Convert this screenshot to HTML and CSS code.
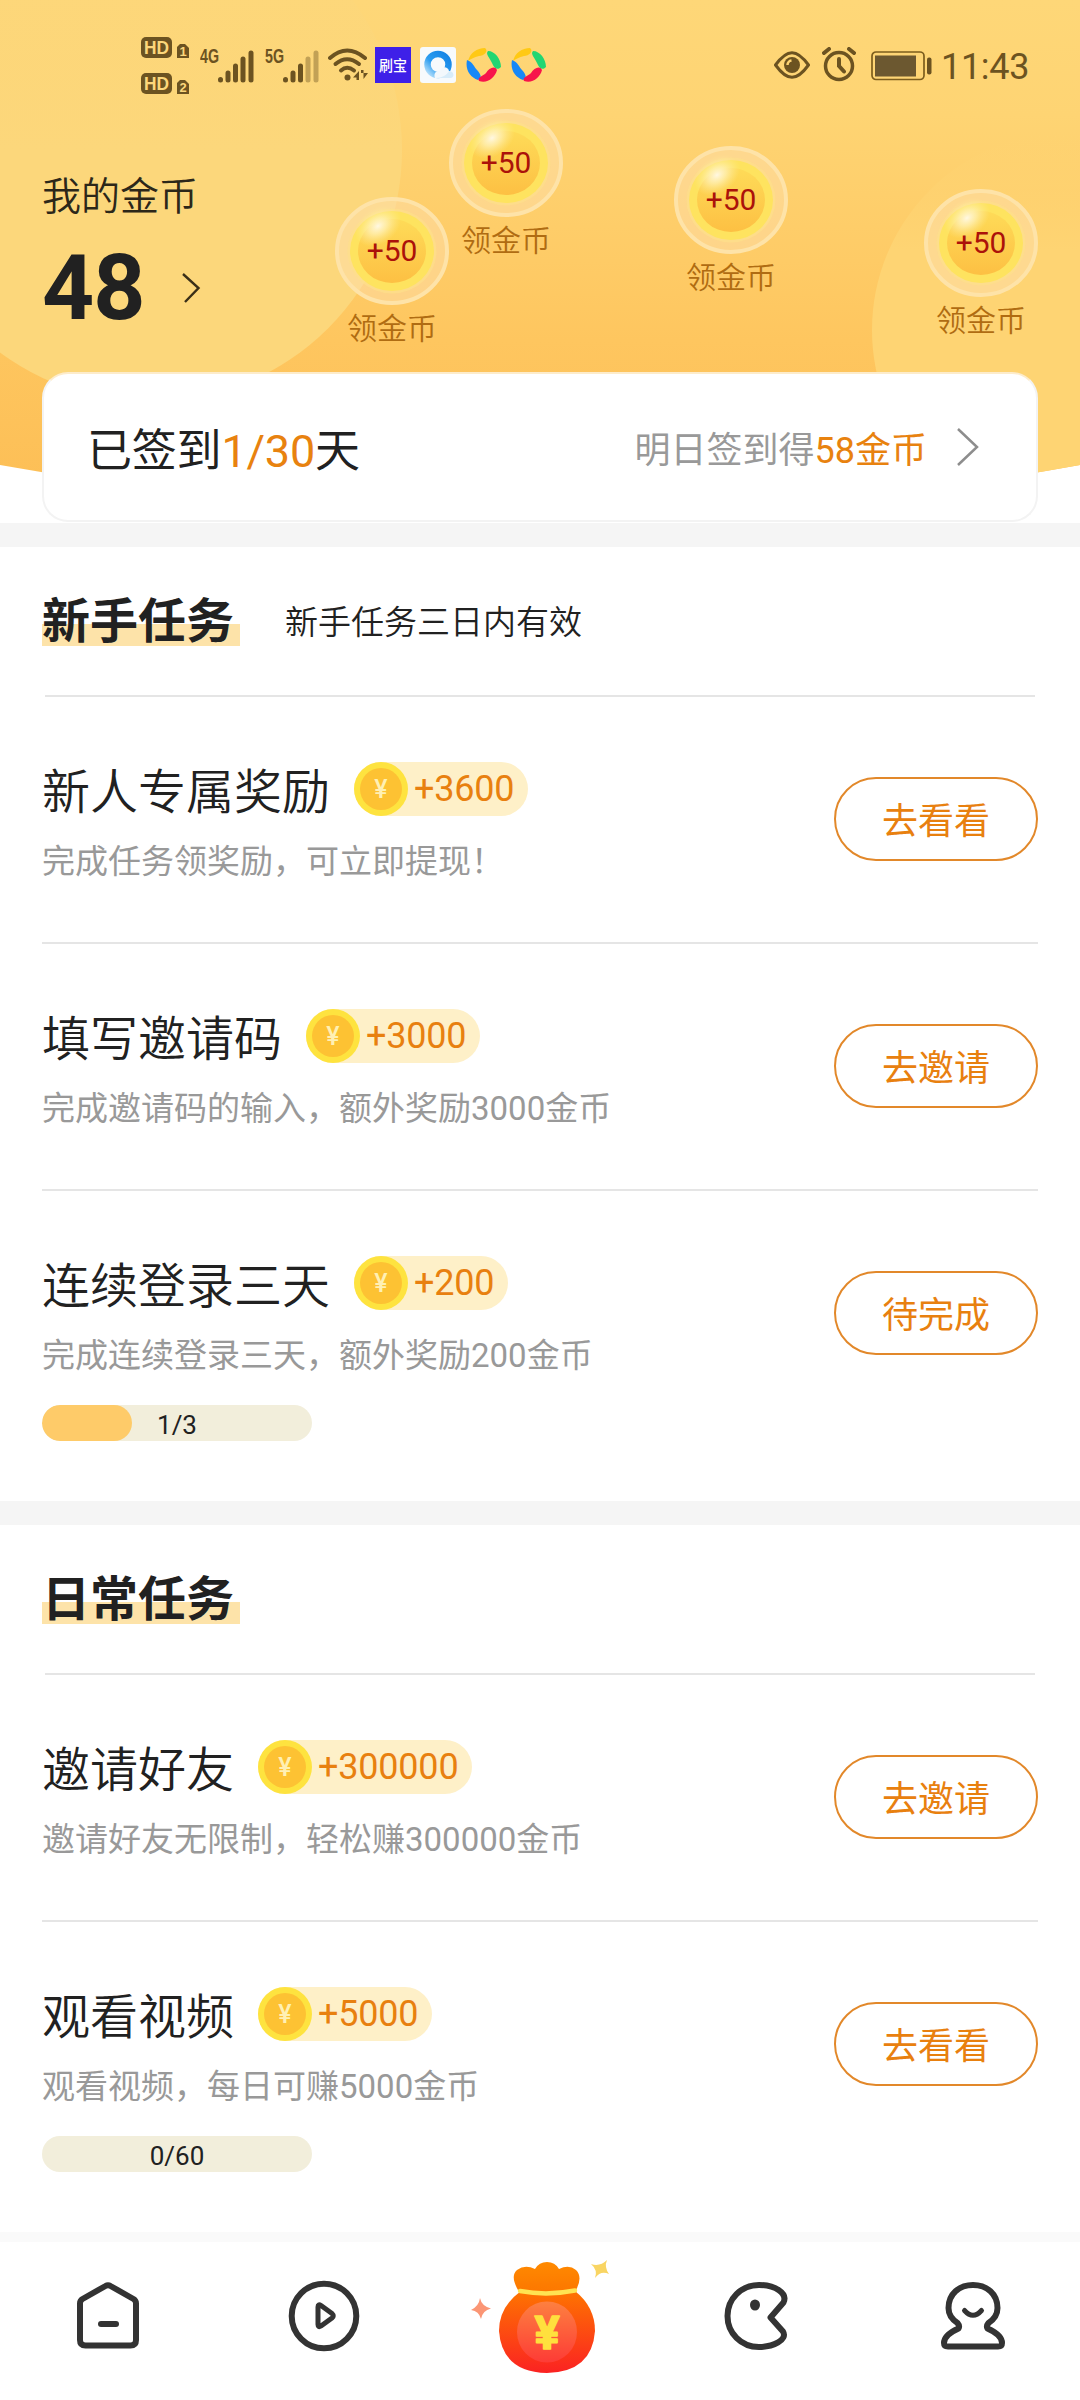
FILE: index.html
```html
<!DOCTYPE html>
<html lang="zh-CN">
<head>
<meta charset="utf-8">
<title>我的金币</title>
<link rel="stylesheet" href="styles.css">
</head>
<body>
<svg class="defs" width="0" height="0" aria-hidden="true">
  <defs>
    <linearGradient id="skyGrad" x1="0" y1="0" x2="0" y2="1"><stop offset="0" stop-color="#fed778"/><stop offset=".22" stop-color="#fed473"/><stop offset=".65" stop-color="#fec65f"/><stop offset="1" stop-color="#fcbd54"/></linearGradient>
    <linearGradient id="rightGlow" x1="0" y1="0" x2="0" y2="1"><stop offset="0" stop-color="#fed473" stop-opacity="0"/><stop offset=".3" stop-color="#fed473"/><stop offset="1" stop-color="#fed473"/></linearGradient>
    <linearGradient id="leftGlow" x1="0" y1="0" x2="0" y2="1"><stop offset="0" stop-color="#fcd77b" stop-opacity=".3"/><stop offset=".5" stop-color="#fcd77b"/><stop offset="1" stop-color="#fcd77b"/></linearGradient>
    <linearGradient id="coinGrad" x1="0" y1="0" x2="0" y2="1"><stop offset="0" stop-color="#fedb58"/><stop offset="1" stop-color="#fdc043"/></linearGradient>
    <radialGradient id="shine"><stop offset="0" stop-color="#fff8e2"/><stop offset=".4" stop-color="#fff1b8" stop-opacity=".75"/><stop offset="1" stop-color="#ffe890" stop-opacity="0"/></radialGradient>
    <linearGradient id="bagGrad" x1="0" y1="0" x2="0" y2="1"><stop offset="0" stop-color="#fe7400"/><stop offset="1" stop-color="#fb2222"/></linearGradient>
    <linearGradient id="bagTop" x1="0" y1="0" x2="0" y2="1"><stop offset="0" stop-color="#ff8a00"/><stop offset="1" stop-color="#fc7600"/></linearGradient>
    <linearGradient id="bagFace" x1="0" y1="0" x2="0" y2="1"><stop offset="0" stop-color="#fd8040"/><stop offset="1" stop-color="#fd3b36"/></linearGradient>
    <linearGradient id="browserGrad" x1="1" y1="0" x2="0" y2="1"><stop offset="0" stop-color="#1583e4"/><stop offset=".6" stop-color="#2b9df0"/><stop offset="1" stop-color="#bfe4fb"/></linearGradient>
    <symbol id="bubble" viewBox="0 0 114 108">
      <ellipse cx="57" cy="54" rx="55" ry="52" fill="#ffe0b4" fill-opacity=".45" stroke="#fee3a8" stroke-width="4"/>
      <ellipse cx="57" cy="54" rx="44.500" ry="42.500" fill="#fee08a" fill-opacity=".7"/>
      <ellipse cx="57" cy="54" rx="42" ry="40" fill="#fee35f"/>
      <ellipse cx="57" cy="54" rx="34" ry="32" fill="url(#coinGrad)"/>
      <ellipse cx="43" cy="29" rx="25" ry="18" fill="url(#shine)" transform="rotate(-35 43 29)"/>
    </symbol>
    <symbol id="coin" viewBox="0 0 54 54">
      <circle cx="27" cy="27" r="27" fill="#fee33f"/>
      <circle cx="27" cy="27" r="21" fill="#fdc233"/>
      <text x="27" y="36" class="coin-yen">¥</text>
    </symbol>
    <symbol id="pinwheel" viewBox="0 0 36 36">
      <path d="M2 14C4 6 11 1 19 1C23 4 18 9 13 9C8 10 5 12 2 14Z" fill="#ffc914"/>
      <path d="M22 4C29 4 35 12 35 20C31 24 28 21 26 16C24 11 19 7 22 4Z" fill="#22d672"/>
      <path d="M1 13C-1 23 4 30 12 33C17 31 14 26 11 23C8 20 7 15 1 13Z" fill="#1688f8"/>
      <path d="M31 23C29 31 21 37 13 34C11 30 17 29 20 26C23 21 29 18 31 23Z" fill="#f7144b"/>
    </symbol>
  </defs>
</svg>

<header class="hero">
  <svg class="hero-bg" viewBox="0 0 1080 523" aria-hidden="true">
    <clipPath id="heroShape"><path d="M0 0H1080V465Q540 563 0 465Z"/></clipPath>
    <g clip-path="url(#heroShape)">
      <rect width="1080" height="523" fill="url(#skyGrad)"/>
      <circle cx="150" cy="150" r="252" fill="url(#leftGlow)"/>
      <circle cx="1070" cy="330" r="198" fill="url(#rightGlow)"/>
    </g>
  </svg>

  <div class="status">
    <svg class="st-hd" width="48" height="58" viewBox="0 0 48 58">
      <g fill="#6c5321">
        <rect width="31" height="21" rx="5"/><path d="M39 7H44L48 11V21H36V10Z"/>
        <rect y="36" width="31" height="21" rx="5"/><path d="M39 43H44L48 47V57H36V46Z"/>
      </g>
      <g class="hd-text"><text x="3" y="17" textLength="25" lengthAdjust="spacingAndGlyphs">HD</text><text x="3" y="53" textLength="25" lengthAdjust="spacingAndGlyphs">HD</text></g>
      <g class="hd-num"><text x="38.500" y="19">1</text><text x="38.500" y="55">2</text></g>
    </svg>
    <svg class="st-4g" width="54" height="42" viewBox="0 -6 54 42">
      <text class="gen" x="0" y="15" textLength="19" lengthAdjust="spacingAndGlyphs">4G</text>
      <g class="bars"><path d="M20.500 31.500V32"/><path d="M28 25V32"/><path d="M35.500 18V32"/><path d="M43 11V32"/><path d="M51 5V32"/></g>
    </svg>
    <svg class="st-5g" width="54" height="42" viewBox="0 -6 54 42">
      <text class="gen" x="0" y="15" textLength="19" lengthAdjust="spacingAndGlyphs">5G</text>
      <g class="bars"><path d="M20.500 31.500V32"/><path d="M28 25V32"/><path d="M35.500 18V32"/><path d="M43 11V32" opacity=".4"/><path d="M51 5V32" opacity=".4"/></g>
    </svg>
    <svg class="st-wifi" width="40" height="34" viewBox="0 0 40 34">
      <g fill="none" stroke="#6c5321" stroke-width="4" stroke-linecap="round"><path d="M2 10Q19 -5 37 10"/><path d="M7.500 16Q19 6.500 31 16"/><path d="M13 22.500Q19 17 26 22.500"/></g>
      <circle cx="19.500" cy="29.500" r="3" fill="#6c5321"/>
      <path d="M31 23V32H28.500V29.500H25ZM33 22H35.500V31L40 25H33Z" fill="#6c5321"/>
    </svg>
    <svg class="st-app" width="36" height="36" viewBox="0 0 36 36"><rect width="36" height="36" fill="#3e20e8"/><text class="app-name" x="18" y="24" textLength="28" lengthAdjust="spacingAndGlyphs">刷宝</text></svg>
    <svg class="st-browser" width="36" height="36" viewBox="0 0 36 36">
      <rect width="36" height="36" rx="3" fill="#f7fafc"/><circle cx="18" cy="17.500" r="10.500" fill="none" stroke="url(#browserGrad)" stroke-width="6.500"/>
      <path d="M15 31C13 26 17 23 20 24C21 19 28 19 29 24C34 24 35 30 31 31Z" fill="#f3f8fc"/><path d="M16 31C22 31 27 28 29 24C34 24 35 30 31 31Z" fill="#d8ecf9"/>
    </svg>
    <svg class="st-pin1" width="36" height="36"><use href="#pinwheel"/></svg>
    <svg class="st-pin2" width="36" height="36"><use href="#pinwheel"/></svg>
    <svg class="st-eye" width="36" height="28" viewBox="0 0 36 28"><path d="M1.500 14C8 5 13 1.700 18 1.700S28 5 34.500 14C28 23 23 26.300 18 26.300S8 23 1.500 14Z" fill="none" stroke="#6c5321" stroke-width="3"/><circle cx="18" cy="14" r="8" fill="#6c5321"/><path d="M13.500 14A4.500 4.500 0 0 1 17.500 9.500" stroke="#fed473" stroke-width="2.500" fill="none"/></svg>
    <svg class="st-alarm" width="34" height="36" viewBox="0 0 34 36"><circle cx="17" cy="19" r="13.500" fill="none" stroke="#6c5321" stroke-width="3.500"/><path d="M17 12V19L22 24.500M2 6L7 2M32 6L27 2" fill="none" stroke="#6c5321" stroke-width="4" stroke-linecap="round"/></svg>
    <svg class="st-batt" width="62" height="30" viewBox="0 0 62 30"><rect x="1" y="1" width="52" height="27.500" rx="4" fill="none" stroke="#7c5d1d" stroke-width="1.700"/><rect x="4" y="4.500" width="41" height="21" fill="#6c5830"/><rect x="56" y="6.500" width="4.500" height="17" rx="2" fill="#6c5321"/></svg>
    <time class="clock">11:43</time>
  </div>

  <div class="balance">
    <p class="balance-label">我的金币</p>
    <div class="balance-row"><strong>48</strong><svg width="20" height="32" viewBox="0 0 20 32"><path d="M2 2L17.500 16L4 30" fill="none" stroke="#3a2f18" stroke-width="2.400"/></svg></div>
  </div>

  <div class="bubble b1"><svg width="114" height="108"><use href="#bubble"/></svg><b>+50</b><span>领金币</span></div>
  <div class="bubble b2"><svg width="114" height="108"><use href="#bubble"/></svg><b>+50</b><span>领金币</span></div>
  <div class="bubble b3"><svg width="114" height="108"><use href="#bubble"/></svg><b>+50</b><span>领金币</span></div>
  <div class="bubble b4"><svg width="114" height="108"><use href="#bubble"/></svg><b>+50</b><span>领金币</span></div>

  <div class="checkin">
    <p class="checkin-days">已签到<em>1/30</em>天</p>
    <p class="checkin-next">明日签到得<em>58金币</em></p>
    <svg width="24" height="40" viewBox="0 0 24 40"><path d="M2 2L21 20L2 38" fill="none" stroke="#8d8d8d" stroke-width="2.500"/></svg>
  </div>
</header>

<main>
  <section class="group">
    <div class="group-head"><h2>新手任务</h2><p>新手任务三日内有效</p></div>
    <article class="task">
      <div class="info">
        <div class="title"><h3>新人专属奖励</h3><span class="reward"><svg width="54" height="54"><use href="#coin"/></svg>+3600</span></div>
        <p>完成任务领奖励，可立即提现！</p>
      </div>
      <button>去看看</button>
    </article>
    <article class="task">
      <div class="info">
        <div class="title"><h3>填写邀请码</h3><span class="reward"><svg width="54" height="54"><use href="#coin"/></svg>+3000</span></div>
        <p>完成邀请码的输入，额外奖励3000金币</p>
      </div>
      <button>去邀请</button>
    </article>
    <article class="task last">
      <div class="info">
        <div class="title"><h3>连续登录三天</h3><span class="reward"><svg width="54" height="54"><use href="#coin"/></svg>+200</span></div>
        <p>完成连续登录三天，额外奖励200金币</p>
        <div class="progress"><i style="width:33.333%"></i><span>1/3</span></div>
      </div>
      <button>待完成</button>
    </article>
  </section>

  <section class="group">
    <div class="group-head"><h2>日常任务</h2></div>
    <article class="task">
      <div class="info">
        <div class="title"><h3>邀请好友</h3><span class="reward"><svg width="54" height="54"><use href="#coin"/></svg>+300000</span></div>
        <p>邀请好友无限制，轻松赚300000金币</p>
      </div>
      <button>去邀请</button>
    </article>
    <article class="task last">
      <div class="info">
        <div class="title"><h3>观看视频</h3><span class="reward"><svg width="54" height="54"><use href="#coin"/></svg>+5000</span></div>
        <p>观看视频，每日可赚5000金币</p>
        <div class="progress"><i style="width:0"></i><span>0/60</span></div>
      </div>
      <button>去看看</button>
    </article>
  </section>
</main>

<nav class="tabs">
  <svg viewBox="0 2242 216 158"><g class="line"><path d="M105.500 2286Q108 2284.500 110.500 2286L133.500 2299Q136 2300.500 136 2303.500V2340Q136 2345.500 130.500 2345.500H85.500Q80 2345.500 80 2340V2303.500Q80 2300.500 82.500 2299Z"/><path d="M101 2324H116"/></g></svg>
  <svg viewBox="216 2242 216 158"><g class="line"><circle cx="324" cy="2316" r="32.300"/><path class="thin" d="M318 2307Q318 2303.500 321 2305.500L332 2313.500Q334.500 2316 332 2318L321 2326Q318 2328 318 2324.500Z"/></g></svg>
  <svg viewBox="432 2242 216 158">
    <path d="M521 2291Q499 2307 499 2331Q502 2372 547 2373Q592 2372 595 2331Q595 2307 575 2291Z" fill="url(#bagGrad)"/>
    <path d="M518 2290Q510 2276 517 2270Q525 2264 535 2269Q539 2262 547 2262Q555 2262 559 2269Q569 2264 576 2270Q583 2277 576 2290Q547 2297 518 2290Z" fill="url(#bagTop)"/>
    <path d="M520 2291Q547 2296 575 2290.500" fill="none" stroke="#ffe352" stroke-width="4.500" stroke-linecap="round"/>
    <ellipse cx="547" cy="2332" rx="30" ry="30.500" fill="url(#bagFace)"/>
    <text x="547" y="2349" class="bag-yen">¥</text>
    <path d="M480 2298Q481.500 2306 491 2308.500Q482.500 2310.500 481 2319Q479 2311 471 2310Q479 2306 480 2298Z" fill="#fb9675"/>
    <path d="M607 2260Q604 2267 609 2274Q601 2270 595 2278Q598 2270 591 2264Q600 2267 607 2260Z" fill="#f9d563"/>
  </svg>
  <svg viewBox="648 2242 216 158"><g class="line"><path d="M770.500 2317.500L783.500 2302.500C788 2293 775 2285 759 2285C741 2285 727.500 2299 727.500 2316S741 2347 759 2347C773 2347 788 2340 783 2331.500Z"/><ellipse cx="755" cy="2305" rx="5" ry="5.500" class="dot"/></g></svg>
  <svg viewBox="864 2242 216 158"><g class="line"><path d="M958.500 2328.500Q960 2326 957.500 2323Q948.500 2317 948.500 2308C948.500 2294 959 2285 973 2285S997.500 2294 997.500 2308Q997.500 2317 988.500 2323Q986 2326 987.500 2328.500Q1002 2335 1002 2343Q1002 2346.500 998 2346.500H948Q944 2346.500 944 2343Q944 2335 958.500 2328.500Z"/><path class="thin" d="M964.500 2310.500Q973 2320 981.500 2310.500"/></g></svg>
</nav>
</body>
</html>
```
FILE: styles.css
```css
* { box-sizing: border-box; margin: 0; padding: 0; }
body {
  width: 1080px;
  height: 2400px;
  overflow: hidden;
  background: #fff;
  color: #212121;
  font-family: Roboto, "Noto Sans CJK SC", sans-serif;
  font-weight: 400;
}
svg { display: block; flex: none; }
.defs { position: absolute; }
em, i { font-style: normal; }

.hero { position: relative; height: 523px; display: flex; flex-direction: column; }
.hero-bg { position: absolute; inset: 0; width: 1080px; height: 523px; }

.status { position: relative; display: flex; height: 100px; padding: 37px 0 0 141px; }
.st-4g { margin: 5px 0 0 11px; }
.st-5g { margin: 5px 0 0 11px; }
.st-wifi { margin: 11px 0 0 9px; }
.st-app { margin: 10px 0 0 7px; }
.st-browser { margin: 10px 0 0 9px; }
.st-pin1 { margin: 10px 0 0 10px; }
.st-pin2 { margin: 10px 0 0 9px; }
.st-eye { margin: 14px 0 0 227px; }
.st-alarm { margin: 10px 0 0 12px; }
.st-batt { margin: 14px 0 0 15px; }
.clock { margin: 9px 0 0 8px; font-size: 36px; line-height: 42px; letter-spacing: -.3px; color: #6c5321; }
.hd-text text { font: bold 18px "Liberation Sans", sans-serif; fill: #fcd77b; }
.hd-num text { font: bold 13px "Liberation Sans", sans-serif; fill: #fcd77b; }
.gen { font: bold 20px "Liberation Sans", sans-serif; fill: #6c5321; }
.bars { stroke: #6c5321; stroke-width: 5; stroke-linecap: round; }
.app-name { font: 500 15px "Noto Sans CJK SC", sans-serif; fill: #fff; text-anchor: middle; }

.balance { position: relative; padding: 69px 0 0 42px; }
.balance-label { font-size: 39px; line-height: 56px; font-weight: 350; color: #2c2719; }
.balance-row { display: flex; align-items: center; gap: 37px; height: 100px; margin-top: 13px; }
.balance-row strong { font-size: 91px; line-height: 100px; font-weight: 700; letter-spacing: -1px; }

.bubble { position: absolute; width: 114px; text-align: center; }
.bubble b { position: absolute; left: 0; right: 0; top: 34px; font-size: 30px; line-height: 40px; font-weight: 400; color: #ab120a; }
.bubble span { display: block; margin-top: 3px; font-size: 30px; line-height: 42px; font-weight: 350; color: #b06c12; }
.b1 { left: 335px; top: 197px; }
.b2 { left: 449px; top: 109px; }
.b3 { left: 674px; top: 146px; }
.b4 { left: 924px; top: 189px; }

.checkin {
  position: absolute;
  left: 42px;
  top: 372px;
  width: 996px;
  height: 150px;
  padding: 0 56px 0 43px;
  display: flex;
  align-items: center;
  background: #fff;
  border: 2px solid #f3f3f3;
  border-top-color: #fdeccb;
  border-radius: 26px;
}
.checkin em { color: #e8820f; }
.checkin-days { flex: 1; font-size: 45px; letter-spacing: -.2px; }
.checkin-next { margin-right: 29px; font-size: 36px; color: #999; }

.group { border-top: 24px solid #f5f5f5; }
.group-head { display: flex; align-items: center; gap: 45px; height: 150px; margin: 0 45px 0 42px; position: relative; }
.group-head::after { content: ""; position: absolute; left: 3px; right: 0; bottom: 0; height: 2px; background: #e5e5e5; }
.group-head h2 {
  width: 198px;
  height: 52px;
  font-size: 48px;
  line-height: 52px;
  font-weight: 700;
  white-space: nowrap;
  background: linear-gradient(#fde3a9, #fde3a9) 0 28px / 198px 22px no-repeat;
}
.group-head p { padding-bottom: 4px; font-size: 33px; font-weight: 350; }
.task { display: flex; justify-content: space-between; align-items: flex-start; height: 247px; margin: 0 42px; padding-top: 65px; border-bottom: 2px solid #e5e5e5; }
.task.last { height: 310px; border-bottom: 0; }
.title { display: flex; align-items: center; gap: 24px; height: 54px; }
.title h3 { padding-top: 7px; font-size: 48px; line-height: 54px; font-weight: 350; }
.reward { display: flex; align-items: center; gap: 6px; height: 54px; padding-right: 14px; border-radius: 27px; background: #fef0c8; color: #e8800f; font-size: 36px; letter-spacing: -.2px; }
.coin-yen { font: 500 25px Roboto, sans-serif; letter-spacing: 0; fill: #fff0b4; text-anchor: middle; }
.info p { margin-top: 22px; font-size: 33px; line-height: 48px; color: #999; }
.task button { width: 204px; height: 84px; margin-top: 15px; padding-bottom: 2px; border: 2px solid #e2882a; border-radius: 42px; background: #fff; color: #e8800f; font: inherit; font-size: 36px; }
.progress { position: relative; width: 270px; height: 36px; margin-top: 25px; border-radius: 18px; background: #f2eedb; overflow: hidden; }
.progress i { display: block; height: 36px; border-radius: 18px; background: #fecb69; }
.progress span { position: absolute; inset: 2px 0 0; text-align: center; font-size: 26px; line-height: 36px; }

.tabs { display: grid; grid-template-columns: repeat(5, 216px); height: 168px; border-top: 10px solid #fafafa; background: #fff; }
.tabs svg { width: 216px; height: 158px; }
.line { fill: none; stroke: #333; stroke-width: 6; stroke-linejoin: round; stroke-linecap: round; }
.line .thin { stroke-width: 5; }
.line .dot { fill: #333; stroke: none; }
.bag-yen { font: 700 47px Roboto, sans-serif; fill: #ffe03d; stroke: #ffe03d; stroke-width: 1.500; stroke-linejoin: round; text-anchor: middle; }
```
